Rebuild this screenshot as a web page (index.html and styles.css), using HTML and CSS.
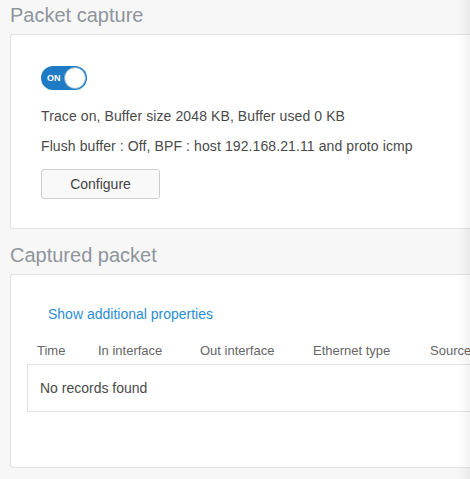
FILE: index.html
```html
<!DOCTYPE html>
<html>
<head>
<meta charset="utf-8">
<link rel="stylesheet" href="styles.css">
</head>
<body>
<div class="page">
  <h2 class="section-title">Packet capture</h2>
  <div class="card card-capture">
    <div class="toggle">
      <span class="toggle-label">ON</span>
      <span class="toggle-knob"></span>
    </div>
    <p class="info">Trace on, Buffer size 2048 KB, Buffer used 0 KB</p>
    <p class="info">Flush buffer : Off, BPF : host 192.168.21.11 and proto icmp</p>
    <button class="btn">Configure</button>
  </div>
  <h2 class="section-title title-second">Captured packet</h2>
  <div class="card card-packets">
    <a class="link">Show additional properties</a>
    <div class="table-head">
      <span class="col col-time">Time</span>
      <span class="col col-in">In interface</span>
      <span class="col col-out">Out interface</span>
      <span class="col col-eth">Ethernet type</span>
      <span class="col col-src">Source</span>
    </div>
    <div class="table-body">No records found</div>
  </div>
</div>
<div class="edge-shade"></div>
</body>
</html>
```
FILE: styles.css
```css
html, body {
  margin: 0;
  padding: 0;
  background: #f7f7f7;
  overflow: hidden;
}
body {
  width: 470px;
  height: 479px;
  font-family: "Liberation Sans", Arial, sans-serif;
  color: #4a4a4a;
}
.page {
  width: 460px;
  padding: 0 0 0 10px;
}
.section-title {
  margin: 0;
  font-size: 20px;
  font-weight: normal;
  color: #8e959b;
  line-height: 24px;
  padding-top: 3px;
  height: 31px;
}
.card {
  background: #fff;
  border: 1px solid #e2e2e2;
  border-right: none;
  border-radius: 3px 0 0 3px;
  box-sizing: border-box;
  margin-right: -1px;
}
.card-capture {
  height: 195px;
  padding: 31px 0 0 30px;
}
.title-second {
  margin-top: 11px;
}
.toggle {
  width: 46px;
  height: 24px;
  border-radius: 12px;
  background: #1f7cc4;
  position: relative;
  box-sizing: border-box;
}
.toggle-label {
  position: absolute;
  left: 6px;
  top: 6px;
  font-size: 9px;
  line-height: 12px;
  color: #fff;
  font-weight: bold;
}
.toggle-knob {
  position: absolute;
  right: 1px;
  top: 1px;
  width: 22px;
  height: 22px;
  border-radius: 50%;
  background: #fff;
  box-sizing: border-box;
  border: 1px solid #7fb1da;
}
.info {
  margin: 0;
  font-size: 14px;
  line-height: 30px;
  letter-spacing: 0.1px;
  white-space: nowrap;
}
.info:first-of-type {
  margin-top: 11px;
}
.btn {
  display: block;
  margin-top: 8px;
  width: 119px;
  height: 30px;
  border: 1px solid #cfcfcf;
  border-radius: 3px;
  background: #f9f9f9;
  font-family: "Liberation Sans", Arial, sans-serif;
  font-size: 14px;
  color: #444;
  padding: 0;
}
.card-packets {
  height: 194px;
  padding: 29px 0 0 16px;
}
.link {
  display: block;
  margin-left: 21px;
  font-size: 14px;
  line-height: 20px;
  color: #2b8ed4;
}
.table-head {
  display: flex;
  margin-top: 14px;
  height: 24px;
  align-items: center;
  font-size: 13px;
  color: #666;
  padding-left: 10px;
  white-space: nowrap;
  overflow: hidden;
}
.col { flex: none; }
.col-time { width: 61px; }
.col-in { width: 102px; }
.col-out { width: 113px; }
.col-eth { width: 117px; }
.table-body {
  margin-top: 2px;
  height: 48px;
  box-sizing: border-box;
  border: 1px solid #e2e2e2;
  border-right: none;
  background: #fff;
  padding-left: 12px;
  font-size: 14px;
  line-height: 46px;
  color: #4a4a4a;
}
.edge-shade {
  position: fixed;
  top: 0;
  right: 0;
  width: 12px;
  height: 479px;
  background: linear-gradient(to right, rgba(0,0,0,0), rgba(0,0,0,0.05));
}
```
